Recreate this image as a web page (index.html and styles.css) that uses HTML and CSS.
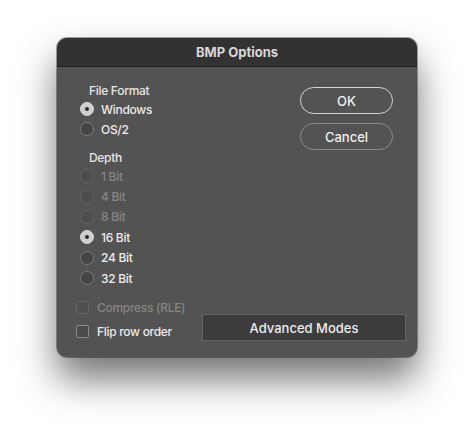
FILE: index.html
```html
<!DOCTYPE html>
<html>
<head>
<meta charset="utf-8">
<link rel="stylesheet" href="styles.css">
</head>
<body>
<div class="dialog">
  <div class="titlebar">BMP Options</div>
  <div class="content">
    <div class="top">
      <div class="left">
        <div class="group-label">File Format</div>
        <div class="radio-row"><span class="radio checked"></span><span>Windows</span></div>
        <div class="radio-row"><span class="radio"></span><span>OS/2</span></div>
        <div class="group-label depth">Depth</div>
        <div class="radio-row disabled"><span class="radio"></span><span>1 Bit</span></div>
        <div class="radio-row disabled"><span class="radio"></span><span>4 Bit</span></div>
        <div class="radio-row disabled"><span class="radio"></span><span>8 Bit</span></div>
        <div class="radio-row"><span class="radio checked"></span><span>16 Bit</span></div>
        <div class="radio-row"><span class="radio"></span><span>24 Bit</span></div>
        <div class="radio-row"><span class="radio"></span><span>32 Bit</span></div>
      </div>
      <div class="right">
        <div class="pill primary">OK</div>
        <div class="pill secondary">Cancel</div>
      </div>
    </div>
    <div class="bottom">
      <div class="checks">
        <div class="check-row disabled"><span class="checkbox"></span><span>Compress (RLE)</span></div>
        <div class="check-row"><span class="checkbox"></span><span>Flip row order</span></div>
      </div>
      <div class="advanced">Advanced Modes</div>
    </div>
  </div>
</div>
</body>
</html>
```
FILE: styles.css
```css
html, body {
  margin: 0;
  padding: 0;
  background: #ffffff;
}
body {
  box-sizing: border-box;
  min-height: 432px;
  padding: 38px 0 76px 57px;
  font-family: Inter, "Liberation Sans", sans-serif;
  font-weight: 500;
  color: #e6e6e6;
}
.dialog {
  width: 360px;
  height: 319px;
  border-radius: 10px;
  background: #535353;
  overflow: hidden;
  box-shadow: 0 0 0 1px rgba(0,0,0,0.35), 0 22px 38px rgba(0,0,0,0.55);
  display: flex;
  flex-direction: column;
}
.titlebar {
  height: 28px;
  background: #323232;
  border-bottom: 1px solid #1f1f1f;
  display: flex;
  align-items: center;
  justify-content: center;
  font-size: 13px;
  font-weight: 700;
  color: #d8d8d8;
}
.content {
  flex: 1;
  display: flex;
  flex-direction: column;
  padding: 16px 11px 14px 19px;
}
.top {
  display: flex;
  justify-content: space-between;
}
.left {
  display: flex;
  flex-direction: column;
  padding-left: 4px;
}
.group-label {
  height: 16px;
  line-height: 16px;
  font-size: 12px;
  letter-spacing: -0.3px;
  padding-left: 9px;
  color: #e6e6e6;
}
.group-label.depth {
  margin-top: 11px;
}
.radio-row {
  height: 20.4px;
  display: flex;
  align-items: center;
  gap: 7px;
  font-size: 12px;
  letter-spacing: -0.3px;
  color: #ececec;
}
.radio-row:nth-child(2), .radio-row:nth-child(3) {
  height: 20px;
}
.radio {
  width: 12px;
  height: 12px;
  border-radius: 50%;
  border: 1px solid #7a7a7a;
  background: #454545;
  box-sizing: content-box;
  display: flex;
  align-items: center;
  justify-content: center;
}
.radio.checked {
  background: #cfcfcf;
  border-color: #d8d8d8;
}
.radio.checked::after {
  content: "";
  width: 4px;
  height: 4px;
  border-radius: 50%;
  background: #2a2a2a;
}
.disabled {
  color: #858585;
}
.disabled .radio {
  background: #4d4d4d;
  border-color: #636363;
}
.right {
  display: flex;
  flex-direction: column;
  gap: 9px;
  padding-top: 4px;
  padding-right: 13px;
}
.pill {
  width: 91px;
  height: 25px;
  border-radius: 14px;
  display: flex;
  align-items: center;
  justify-content: center;
  font-size: 13px;
  color: #f0f0f0;
}
.pill.primary {
  border: 1px solid #d6d6d6;
}
.pill.secondary {
  border: 1px solid #8c8c8c;
}
.bottom {
  margin-top: auto;
  display: flex;
  align-items: flex-end;
  justify-content: space-between;
}
.checks {
  display: flex;
  flex-direction: column;
}
.check-row {
  height: 24px;
  display: flex;
  align-items: center;
  gap: 8px;
  font-size: 12px;
  letter-spacing: -0.3px;
  color: #ececec;
}
.check-row.disabled {
  color: #858585;
}
.checkbox {
  width: 11px;
  height: 11px;
  border: 1px solid #8a8a8a;
  border-radius: 2px;
  background: #4a4a4a;
}
.check-row.disabled .checkbox {
  border-color: #666666;
  background: #505050;
}
.advanced {
  width: 202px;
  height: 25px;
  margin-bottom: 2px;
  background: #3d3d3d;
  border: 1px solid #636363;
  display: flex;
  align-items: center;
  justify-content: center;
  font-size: 13px;
  color: #ececec;
}
```
